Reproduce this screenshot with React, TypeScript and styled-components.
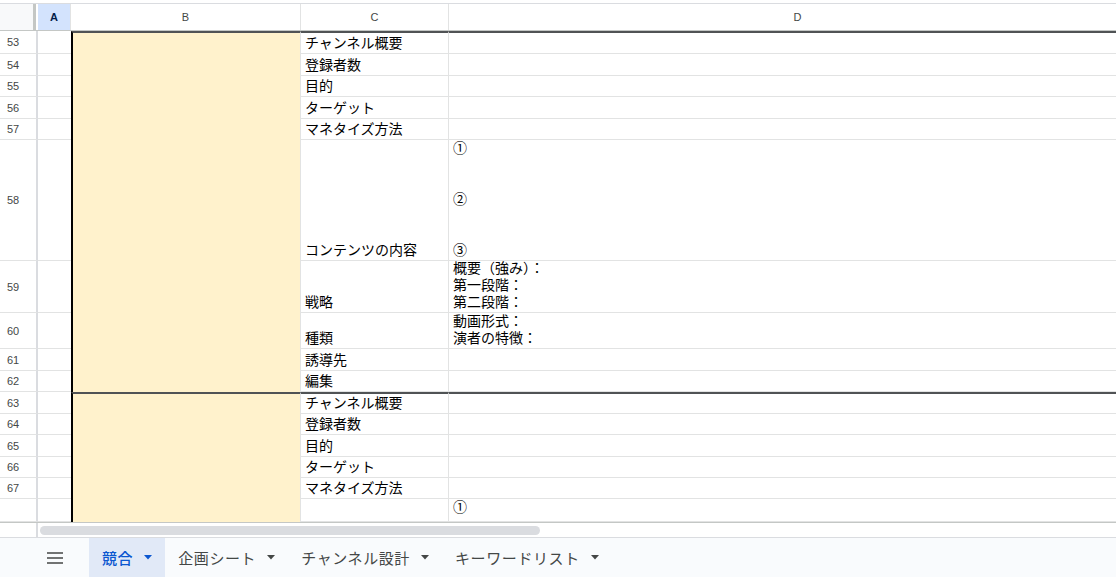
import styled, { createGlobalStyle } from "styled-components";

const GlobalStyle = createGlobalStyle`
    html, body {
        margin: 0;
        padding: 0;
        background: #ffffff;
        overflow: hidden;
    }
    body {
        font-family: "Liberation Sans", "Noto Sans CJK JP", sans-serif;
    }
`

const COLUMNS = "38px 33px 230px 148px 698px"
const GRID = "#e2e3e3"
const HEAD_LINE = "#c4c7c5"

type Row = { n?: number; h: number; c?: string; d?: string; top?: boolean }

const groups: Row[][] = [
    [
        { n: 53, h: 23, c: "チャンネル概要" },
        { n: 54, h: 22, c: "登録者数" },
        { n: 55, h: 21, c: "目的" },
        { n: 56, h: 22, c: "ターゲット" },
        { n: 57, h: 21, c: "マネタイズ方法" },
        { n: 58, h: 121, c: "コンテンツの内容", d: "①\n\n\n②\n\n\n③" },
        { n: 59, h: 52, c: "戦略", d: "概要（強み）：\n第一段階：\n第二段階：" },
        { n: 60, h: 36, c: "種類", d: "動画形式：\n演者の特徴：" },
        { n: 61, h: 22, c: "誘導先" },
        { n: 62, h: 21, c: "編集" },
    ],
    [
        { n: 63, h: 22, c: "チャンネル概要" },
        { n: 64, h: 21, c: "登録者数" },
        { n: 65, h: 22, c: "目的" },
        { n: 66, h: 21, c: "ターゲット" },
        { n: 67, h: 21, c: "マネタイズ方法" },
        { h: 23, d: "①", top: true },
    ],
]

const tabs = ["競合", "企画シート", "チャンネル設計", "キーワードリスト"]

const Page = styled.div`
    width: 1116px;
    height: 577px;
    display: flex;
    flex-direction: column;
    padding-top: 3px;
    box-sizing: border-box;
    overflow: hidden;
`

const HeaderRow = styled.div`
    display: grid;
    grid-template-columns: ${COLUMNS};
    height: 28px;
    box-sizing: border-box;
    border-top: 1px solid #dadce0;
    border-bottom: 1px solid ${HEAD_LINE};
`

const Corner = styled.div`
    background: #f8f9fa;
    box-shadow: inset -2px 0 0 #ffffff, inset -5px 0 0 #c4c7c5;
`

const ColHead = styled.div<{ $active?: boolean }>`
    display: flex;
    align-items: center;
    justify-content: center;
    font-size: 11px;
    color: ${(p) => (p.$active ? "#041e49" : "#444746")};
    font-weight: ${(p) => (p.$active ? 700 : 400)};
    background: ${(p) => (p.$active ? "#d3e3fd" : "#ffffff")};
    border-right: 1px solid ${GRID};
`

const Group = styled.div<{ $tracks: string }>`
    display: grid;
    grid-template-columns: ${COLUMNS};
    grid-template-rows: ${(p) => p.$tracks};
`

const RowHead = styled.div`
    display: flex;
    align-items: center;
    padding-left: 7px;
    font-size: 11px;
    color: #444746;
    border-right: 2px solid #dadce0;
    border-bottom: 1px solid ${GRID};
`

const ACell = styled.div`
    border-bottom: 1px solid ${GRID};
`

const Merged = styled.div<{ $span: number; $top?: boolean }>`
    grid-column: 3;
    grid-row: 1 / span ${(p) => p.$span};
    background: #fff2cc;
    border-left: 2px solid #000000;
    border-right: 1px solid ${GRID};
    border-top: ${(p) => (p.$top ? "2px solid #505355" : "none")};
`

const Cell = styled.div<{ $top?: boolean; $alignTop?: boolean }>`
    display: flex;
    flex-direction: column;
    justify-content: ${(p) => (p.$alignTop ? "flex-start" : "flex-end")};
    box-sizing: border-box;
    padding: 0 4px 1px;
    font-size: 14px;
    line-height: 17px;
    color: #000000;
    white-space: pre-line;
    overflow: hidden;
    border-right: 1px solid ${GRID};
    border-bottom: 1px solid ${GRID};
    border-top: ${(p) => (p.$top ? "2px solid #505355" : "none")};
`

const ScrollArea = styled.div`
    height: 15px;
    display: flex;
    align-items: center;
    border-top: 1px solid ${HEAD_LINE};
    box-sizing: border-box;
`

const ScrollCorner = styled.div`
    width: 36px;
    height: 100%;
    border-right: 2px solid #dadce0;
`

const Thumb = styled.div`
    margin-left: 2px;
    width: 500px;
    height: 9px;
    border-radius: 5px;
    background: #dadce0;
`

const TabBar = styled.div`
    flex: 1;
    display: flex;
    align-items: stretch;
    padding-left: 36px;
    background: #f9fbfd;
    border-top: 1px solid #dadce0;
`

const MenuButton = styled.div`
    width: 37px;
    margin-right: 16px;
    display: flex;
    align-items: center;
    justify-content: center;
`

const Tab = styled.div<{ $active?: boolean }>`
    display: flex;
    align-items: center;
    gap: 11px;
    padding: 0 13px;
    font-family: "Noto Sans CJK JP", "Liberation Sans", sans-serif;
    font-size: 15px;
    letter-spacing: 0.6px;
    font-weight: ${(p) => (p.$active ? 500 : 400)};
    color: ${(p) => (p.$active ? "#0b57d0" : "#444746")};
    background: ${(p) => (p.$active ? "#e1e9f7" : "transparent")};
`

function Caret({ color }: { color: string }) {
    return (
        <svg width="8" height="5" viewBox="0 0 8 5">
            <path d="M0 0 L8 0 L4 4.5 Z" fill={color} />
        </svg>
    )
}

function MenuIcon() {
    return (
        <svg width="16" height="12" viewBox="0 0 16 12">
            <path d="M0 1h16M0 6h16M0 11h16" stroke="#444746" strokeWidth="1.6" />
        </svg>
    )
}

export default function App() {
    return (
        <Page>
            <GlobalStyle />
            <HeaderRow>
                <Corner />
                <ColHead $active>A</ColHead>
                <ColHead>B</ColHead>
                <ColHead>C</ColHead>
                <ColHead>D</ColHead>
            </HeaderRow>

            {groups.map((rows, gi) => (
                <Group key={gi} $tracks={rows.map((r) => `${r.h}px`).join(" ")}>
                    <Merged $span={rows.length} $top />
                    {rows.map((r, i) => [
                        <RowHead key={`h${i}`}>{r.n ?? ""}</RowHead>,
                        <ACell key={`a${i}`} />,
                        <Cell key={`c${i}`} $top={i === 0}>{r.c ?? ""}</Cell>,
                        <Cell key={`d${i}`} $top={i === 0} $alignTop={r.top}>{r.d ?? ""}</Cell>,
                    ])}
                </Group>
            ))}

            <ScrollArea>
                <ScrollCorner />
                <Thumb />
            </ScrollArea>

            <TabBar>
                <MenuButton>
                    <MenuIcon />
                </MenuButton>
                {tabs.map((t, i) => (
                    <Tab key={t} $active={i === 0}>
                        {t}
                        <Caret color={i === 0 ? "#0b57d0" : "#444746"} />
                    </Tab>
                ))}
            </TabBar>
        </Page>
    )
}
